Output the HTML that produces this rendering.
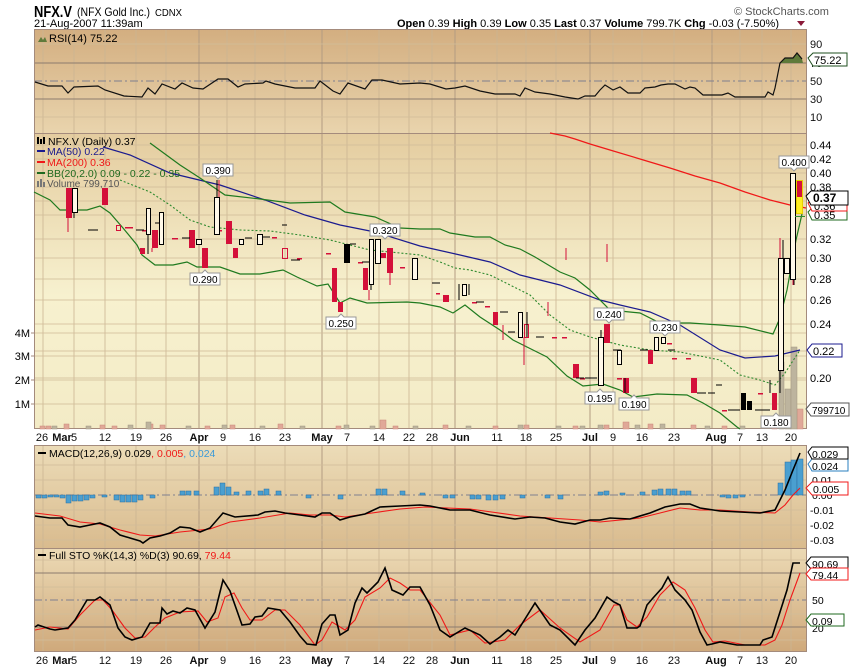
<!DOCTYPE html>
<html><head><meta charset="utf-8"><style>
html,body{margin:0;padding:0;background:#fff;width:850px;height:668px;overflow:hidden}
svg{display:block;font-family:"Liberation Sans",sans-serif}
</style></head><body>
<svg width="850" height="668" viewBox="0 0 850 668" xmlns="http://www.w3.org/2000/svg">
<defs>
<linearGradient id="gR" x1="0" y1="0" x2="0" y2="1"><stop offset="0" stop-color="#d3ae80"/><stop offset="1" stop-color="#e9d4ad"/></linearGradient>
<linearGradient id="gP" x1="0" y1="0" x2="0" y2="1"><stop offset="0" stop-color="#e4cc9f"/><stop offset="0.55" stop-color="#f7f1cf"/><stop offset="1" stop-color="#f3ebc6"/></linearGradient>
<linearGradient id="gM" x1="0" y1="0" x2="0" y2="1"><stop offset="0" stop-color="#ecdcb8"/><stop offset="1" stop-color="#d9bb8e"/></linearGradient>
<linearGradient id="gS" x1="0" y1="0" x2="0" y2="1"><stop offset="0" stop-color="#ecdab5"/><stop offset="1" stop-color="#cfa97b"/></linearGradient>
</defs>
<rect width="850" height="668" fill="#fff"/>
<!-- header -->
<text x="34" y="17" font-size="16" font-weight="bold" textLength="38" lengthAdjust="spacingAndGlyphs">NFX.V</text>
<text x="77" y="16" font-size="12" textLength="73" lengthAdjust="spacingAndGlyphs">(NFX Gold Inc.)</text>
<text x="155" y="16" font-size="10" textLength="27" lengthAdjust="spacingAndGlyphs">CDNX</text>
<text x="34" y="27" font-size="11">21-Aug-2007 11:39am</text>
<text x="734" y="15" font-size="11" fill="#555">© StockCharts.com</text>
<text x="397" y="27" font-size="11"><tspan font-weight="bold">Open</tspan> 0.39 <tspan font-weight="bold">High</tspan> 0.39 <tspan font-weight="bold">Low</tspan> 0.35 <tspan font-weight="bold">Last</tspan> 0.37 <tspan font-weight="bold">Volume</tspan> 799.7K <tspan font-weight="bold">Chg</tspan> -0.03 (-7.50%)</text>
<path d="M797 21h8l-4 5z" fill="#8b1a3a"/>

<!-- panels -->
<rect x="34" y="29" width="773" height="104" fill="url(#gR)"/>
<rect x="34" y="133" width="773" height="296" fill="url(#gP)"/>
<rect x="34" y="445" width="773" height="103" fill="url(#gM)"/>
<rect x="34" y="548" width="773" height="104" fill="url(#gS)"/>

<!-- vertical grids -->
<g stroke="#cbb593" stroke-width="1" opacity="0.8">
<path d="M43 29V429M74 29V429M105 29V429M136 29V429M166 29V429M227 29V429M255 29V429M285 29V429M347 29V429M379 29V429M409 29V429M432 29V429M497 29V429M526 29V429M556 29V429M613 29V429M642 29V429M674 29V429M740 29V429M762 29V429M791 29V429"/>
<path d="M43 445V652M74 445V652M105 445V652M136 445V652M166 445V652M227 445V652M255 445V652M285 445V652M347 445V652M379 445V652M409 445V652M432 445V652M497 445V652M526 445V652M556 445V652M613 445V652M642 445V652M674 445V652M740 445V652M762 445V652M791 445V652"/>
</g>
<g stroke="#b39c82" stroke-width="1">
<path d="M199 29V429M322 29V429M455 29V429M590 29V429M712 29V429M199 445V652M322 445V652M455 445V652M590 445V652M712 445V652"/>
</g>
<!-- horizontal grids -->
<g stroke="#d2bd9a" stroke-width="1" opacity="0.8">
<path d="M34 44H807M34 117H807M34 145H807M34 159H807M34 173H807M34 187H807M34 201H807M34 215H807M34 239H807M34 258H807M34 279H807M34 300H807M34 324H807M34 351H807M34 378H807M34 404H807M34 333H807M34 356H807M34 380H807"/>
<path d="M34 465H807M34 480H807M34 510H807M34 525H807M34 540H807M34 560H807M34 587H807M34 614H807M34 640H807"/>
</g>
<g stroke="#8c7b6e" stroke-width="1">
<path d="M34 63H807M34 99H807M34 573H807M34 627H807"/>
</g>
<g stroke="#7f7f8f" stroke-width="1" stroke-dasharray="8,3,2,3">
<path d="M34 81H807M34 600H807M34 495H807"/>
</g>
<!-- panel borders -->
<g fill="none" stroke="#a48b7c" stroke-width="1">
<rect x="34.5" y="29.5" width="772" height="399"/>
<path d="M34 133.5H807"/>
<rect x="34.5" y="445.5" width="772" height="206"/>
<path d="M34 548.5H807"/>
</g>

<!-- RSI -->
<path d="M780 63L785 58L793 58L797 53L802 59L803 63Z" fill="#5f7a3a"/>
<polyline fill="none" stroke="#111" stroke-width="1.2" points="35,82 48,86 62,86 68,93 74,87 98,86 105,90 124,96 142,97 148,88 155,94 162,84 175,89 182,83 193,88 203,89 218,79 228,79 238,87 245,84 263,83 266,81 275,84 295,88 315,88 320,81 333,91 340,94 348,83 365,89 372,80 382,80 400,84 420,83 430,84 446,89 455,88 465,86 480,91 495,94 515,94 520,96 525,88 535,92 550,94 565,97 578,99 585,96 595,96 600,90 605,85 613,90 620,87 628,93 640,93 645,88 655,87 661,85 668,84 675,84 685,89 690,87 695,88 703,95 713,95 722,95 728,93 735,97 765,97 768,92 773,95 775,88 780,63 785,58 793,58 797,53 802,59"/>
<path d="M38 42l3-5 2 3 2-3 2 5z" fill="#5f7a3a"/>
<text x="49" y="42" font-size="11">RSI(14) 75.22</text>
<g font-size="11" fill="#111">
<text x="810" y="48">90</text><text x="810" y="67">70</text><text x="810" y="85">50</text><text x="810" y="103">30</text><text x="810" y="121">10</text>
</g>
<path d="M808 58l5-5h34v13h-34z" fill="#fff" stroke="#1f4f1f"/>
<text x="814" y="64" font-size="11">75.22</text>

<!-- Price: volume bars -->
<g fill="#e0a898" stroke="#c98878" stroke-width="0.5">
<rect x="40" y="426" width="5" height="3"/><rect x="46" y="426" width="5" height="3"/><rect x="64" y="424" width="5" height="5"/><rect x="100" y="425" width="5" height="4"/><rect x="112" y="426" width="5" height="3"/><rect x="148" y="424" width="5" height="5"/><rect x="160" y="425" width="5" height="4"/><rect x="205" y="426" width="5" height="3"/><rect x="230" y="425" width="5" height="4"/><rect x="278" y="424" width="5" height="5"/><rect x="336" y="426" width="5" height="3"/><rect x="380" y="420" width="6" height="9"/><rect x="393" y="426" width="5" height="3"/><rect x="443" y="425" width="5" height="4"/><rect x="493" y="426" width="5" height="3"/><rect x="524" y="425" width="5" height="4"/><rect x="573" y="426" width="5" height="3"/><rect x="604" y="425" width="5" height="4"/><rect x="623" y="422" width="6" height="7"/><rect x="648" y="424" width="5" height="5"/><rect x="691" y="425" width="5" height="4"/><rect x="722" y="426" width="5" height="3"/><rect x="772" y="426" width="5" height="3"/><rect x="797" y="409" width="6" height="20"/>
</g>
<g fill="#bdb49e" stroke="#9f9680" stroke-width="0.5">
<rect x="52" y="426" width="5" height="3"/><rect x="86" y="426" width="5" height="3"/><rect x="128" y="425" width="5" height="4"/><rect x="146" y="422" width="5" height="7"/><rect x="186" y="426" width="5" height="3"/><rect x="222" y="425" width="5" height="4"/><rect x="260" y="426" width="5" height="3"/><rect x="300" y="426" width="5" height="3"/><rect x="344" y="425" width="5" height="4"/><rect x="370" y="426" width="5" height="3"/><rect x="413" y="426" width="5" height="3"/><rect x="466" y="426" width="5" height="3"/><rect x="518" y="425" width="5" height="4"/><rect x="556" y="426" width="5" height="3"/><rect x="580" y="426" width="5" height="3"/><rect x="598" y="425" width="5" height="4"/><rect x="635" y="425" width="5" height="4"/><rect x="660" y="424" width="5" height="5"/><rect x="705" y="426" width="5" height="3"/><rect x="740" y="426" width="5" height="3"/><rect x="779" y="362" width="5" height="67"/><rect x="785" y="389" width="6" height="40"/><rect x="791" y="347" width="6" height="82"/>
</g>

<!-- MA200 -->
<polyline fill="none" stroke="#f01818" stroke-width="1.2" points="550,133 565,136 575,139 590,144 610,150 640,159 670,168 695,176 720,183 745,192 770,200 790,205 806,208"/>
<!-- MA50 -->
<polyline fill="none" stroke="#1b1b8f" stroke-width="1.2" points="103,147 130,155 170,173 220,185 265,200 305,215 340,225 375,232 420,246 460,255 490,262 520,275 560,285 600,300 620,305 650,312 680,325 720,350 745,358 775,356 800,350"/>
<!-- BB upper -->
<polyline fill="none" stroke="#1f7a1f" stroke-width="1.2" points="150,143 180,165 200,178 225,195 260,199 290,203 330,202 345,212 375,217 400,228 420,229 440,229 450,233 475,237 490,237 505,245 520,249 535,257 560,272 575,278 590,290 610,310 640,313 660,323 690,323 720,325 745,327 773,334 780,318 787,290 796,240 802,214"/>
<!-- BB lower -->
<polyline fill="none" stroke="#1f7a1f" stroke-width="1.2" points="34,192 50,200 60,210 87,210 100,206 110,213 123,228 137,245 142,255 155,265 173,265 187,262 197,267 220,267 240,274 260,274 283,270 297,277 317,286 328,284 340,303 350,298 367,303 407,302 420,303 440,307 453,313 465,305 480,317 500,330 513,340 533,350 547,357 567,376 583,386 603,384 620,390 633,397 657,394 687,395 703,403 720,413 737,427 740,429"/>
<!-- BB mid -->
<polyline fill="none" stroke="#2f8a2f" stroke-width="1.1" stroke-dasharray="2,2" points="120,180 150,192 170,205 190,220 210,227 240,230 270,231 300,235 330,240 350,245 370,250 400,253 420,255 440,262 455,268 470,270 490,275 510,285 530,295 550,315 570,330 590,337 620,345 650,350 680,352 700,356 720,360 740,375 760,380 775,385 785,373 800,350"/>

<!-- candles -->
<g stroke="#d4103a" stroke-width="1">
<path d="M68 218V232M219 180V197M607 244V262M369 290V300M152 248V252M390 273V285M566 248V260M524 337V365M503 325V340M548 302V316M780 238V393M793 279V285"/>
</g>
<g fill="#d4103a">
<rect x="66" y="188" width="6" height="30"/><rect x="102" y="188" width="6" height="17"/><rect x="140" y="248" width="5" height="6"/><rect x="152" y="230" width="6" height="18"/><rect x="189" y="230" width="6" height="18"/><rect x="202" y="248" width="6" height="20"/><rect x="226" y="221" width="6" height="23"/><rect x="233" y="248" width="5" height="10"/><rect x="332" y="268" width="5" height="34"/><rect x="338" y="302" width="5" height="10"/><rect x="363" y="268" width="5" height="22"/><rect x="380" y="253" width="6" height="5"/><rect x="387" y="248" width="6" height="25"/><rect x="443" y="295" width="6" height="7"/><rect x="493" y="312" width="5" height="13"/><rect x="573" y="364" width="6" height="14"/><rect x="604" y="324" width="6" height="19"/><rect x="623" y="378" width="6" height="15"/><rect x="648" y="350" width="5" height="14"/><rect x="691" y="378" width="6" height="15"/><rect x="772" y="393" width="5" height="17"/>
</g>
<g fill="none" stroke="#d4103a" stroke-width="1">
<rect x="116.5" y="225.5" width="4" height="5"/><rect x="282.5" y="248.5" width="5" height="10"/><rect x="524.5" y="324.5" width="4" height="13"/>
</g>
<g fill="#d4103a">
<rect x="125" y="227" width="8" height="1.5"/><rect x="142" y="230" width="6" height="1.5"/><rect x="172" y="238" width="6" height="1.5"/><rect x="216" y="230" width="6" height="1.5"/><rect x="272" y="237" width="5" height="1.5"/><rect x="297" y="258" width="5" height="1.5"/><rect x="326" y="253" width="5" height="1.5"/><rect x="358" y="262" width="5" height="1.5"/><rect x="400" y="267" width="5" height="1.5"/><rect x="436" y="293" width="4" height="1.5"/><rect x="472" y="302" width="5" height="1.5"/><rect x="485" y="306" width="5" height="1.5"/><rect x="552" y="337" width="5" height="1.5"/><rect x="562" y="337" width="5" height="1.5"/><rect x="580" y="378" width="5" height="1.5"/><rect x="617" y="378" width="5" height="1.5"/><rect x="667" y="343" width="5" height="1.5"/><rect x="672" y="358" width="5" height="1.5"/><rect x="686" y="358" width="5" height="1.5"/><rect x="722" y="410" width="5" height="1.5"/><rect x="758" y="393" width="5" height="1.5"/>
</g>
<g stroke="#000" stroke-width="1">
<path d="M74 212V218M148 234V254M217 180V197M371 284V290M459 284V300M469 284V295M527 312V337M601 330V385M625 378V393M656 337V350M780 370V393M794 279V285M770 380V393M783 240V258M88 230H98M136 230H144M182 238H190M245 238H252M262 237H270M291 260H300M350 244H356M432 283H440M476 302H484M500 312H508M508 332H515M536 337H544M576 378H584M585 378H597M613 350H621M640 350H648M668 350H675M697 393H706M708 393H715M716 385H722M728 410H740M755 410H770M282 225H287M155 223H160M362 262H370"/>
</g>
<g fill="#fff8e8" stroke="#000" stroke-width="1">
<rect x="72.5" y="188.5" width="5" height="24"/><rect x="146.5" y="208.5" width="4" height="26"/><rect x="159.5" y="212.5" width="4" height="32"/><rect x="196.5" y="239.5" width="5" height="5"/><rect x="214.5" y="197.5" width="5" height="37"/><rect x="239.5" y="239.5" width="4" height="5"/><rect x="257.5" y="234.5" width="5" height="10"/><rect x="369.5" y="239.5" width="4" height="45"/><rect x="375.5" y="239.5" width="5" height="24"/><rect x="412.5" y="258.5" width="5" height="21"/><rect x="462.5" y="284.5" width="4" height="11"/><rect x="518.5" y="312.5" width="4" height="25"/><rect x="598.5" y="337.5" width="5" height="48"/><rect x="617.5" y="350.5" width="4" height="14"/><rect x="654.5" y="337.5" width="4" height="13"/><rect x="661.5" y="337.5" width="4" height="6"/><rect x="778.5" y="258.5" width="5" height="112"/><rect x="784.5" y="258.5" width="5" height="15"/><rect x="790.5" y="173.5" width="5" height="106"/>
</g>
<g fill="#000">
<rect x="344" y="244" width="6" height="19"/><rect x="741" y="393" width="5" height="17"/><rect x="747" y="401" width="5" height="9"/>
</g>
<rect x="796.5" y="180.5" width="6" height="33" fill="#ffee22" stroke="#e8d000"/>
<rect x="797" y="181" width="5" height="16" fill="#d4103a"/>
<rect x="795" y="216" width="10" height="1" fill="#2f8a2f"/>

<!-- price labels -->
<g font-size="10" text-anchor="middle">
<path d="M203 164h30v12h-12l-3 3-3-3h-12z" fill="#fff" stroke="#999"/><text x="218" y="174">0.390</text>
<path d="M370 224h30v12h-12l-3 3-3-3h-12z" fill="#fff" stroke="#999"/><text x="385" y="234">0.320</text>
<path d="M779 156h30v12h-12l-3 3-3-3h-12z" fill="#fff" stroke="#999"/><text x="794" y="166">0.400</text>
<path d="M594 308h30v12h-12l-3 3-3-3h-12z" fill="#fff" stroke="#999"/><text x="609" y="318">0.240</text>
<path d="M650 321h30v12h-12l-3 3-3-3h-12z" fill="#fff" stroke="#999"/><text x="665" y="331">0.230</text>
<path d="M190 273h12l3-3 3 3h12v12h-30z" fill="#fff" stroke="#999"/><text x="205" y="283">0.290</text>
<path d="M326 317h12l3-3 3 3h12v12h-30z" fill="#fff" stroke="#999"/><text x="341" y="327">0.250</text>
<path d="M585 392h12l3-3 3 3h12v12h-30z" fill="#fff" stroke="#999"/><text x="600" y="402">0.195</text>
<path d="M619 398h12l3-3 3 3h12v12h-30z" fill="#fff" stroke="#999"/><text x="634" y="408">0.190</text>
<path d="M761 416h12l3-3 3 3h12v12h-30z" fill="#fff" stroke="#999"/><text x="776" y="426">0.180</text>
</g>
<!-- legend -->
<g font-size="10.5">
<path d="M37 137h2v7h-2zM40 139h2v5h-2zM43 137h2v7h-2z" fill="#000"/>
<text x="48" y="145">NFX.V (Daily) 0.37</text>
<rect x="37" y="150" width="8" height="2" fill="#1b1b8f"/><text x="47" y="155" fill="#1b1b8f">MA(50) 0.22</text>
<rect x="37" y="161" width="8" height="2" fill="#f01818"/><text x="47" y="166" fill="#f01818">MA(200) 0.36</text>
<rect x="37" y="172" width="8" height="2" fill="#1f6a1f"/><text x="47" y="177" fill="#1f6a1f">BB(20,2.0) 0.09 - 0.22 - 0.35</text>
<path d="M37 181h2v6h-2zM40 179h2v8h-2zM43 182h2v5h-2z" fill="#777"/>
<text x="47" y="187" fill="#555" font-size="10">Volume 799,710</text>
</g>
<!-- price axis -->
<g font-size="11">
<text x="810" y="149">0.44</text><text x="810" y="163">0.42</text><text x="810" y="177">0.40</text><text x="810" y="191">0.38</text><text x="810" y="243">0.32</text><text x="810" y="262">0.30</text><text x="810" y="283">0.28</text><text x="810" y="304">0.26</text><text x="810" y="328">0.24</text><text x="810" y="382">0.20</text>
</g>
<path d="M808 212l4-4h35v12h-35z" fill="#fff" stroke="#1f6a1f"/><text x="814" y="219" font-size="11">0.35</text>
<path d="M808 203l4-4h35v12h-35z" fill="#fff" stroke="#f01818"/><text x="814" y="210" font-size="11">0.36</text>
<path d="M806 196l5-5h37v14h-37z" fill="#fff" stroke="#000"/><text x="813" y="202" font-size="12" font-weight="bold">0.37</text>
<path d="M807 350l5-6h30v13h-30z" fill="#fff" stroke="#1b1b8f"/><text x="813" y="355" font-size="11">0.22</text>
<path d="M806 409l5-6h38v13h-38z" fill="#fff" stroke="#555"/><text x="812" y="414" font-size="10">799710</text>
<g font-size="11" text-anchor="end"><text x="30" y="337">4M</text><text x="30" y="360">3M</text><text x="30" y="384">2M</text><text x="30" y="408">1M</text></g>
<path d="M31 333h3M31 356h3M31 380h3M31 404h3" stroke="#a48b7c"/>

<!-- dates -->
<g font-size="11" text-anchor="middle" fill="#111">
<text x="42" y="441">26</text><text x="74" y="441">5</text><text x="105" y="441">12</text><text x="136" y="441">19</text><text x="166" y="441">26</text><text x="223" y="441">9</text><text x="255" y="441">16</text><text x="285" y="441">23</text><text x="347" y="441">7</text><text x="379" y="441">14</text><text x="409" y="441">22</text><text x="432" y="441">28</text><text x="497" y="441">11</text><text x="526" y="441">18</text><text x="556" y="441">25</text><text x="613" y="441">9</text><text x="642" y="441">16</text><text x="674" y="441">23</text><text x="740" y="441">7</text><text x="762" y="441">13</text><text x="791" y="441">20</text>
<g font-weight="bold"><text x="62" y="441">Mar</text><text x="199" y="441">Apr</text><text x="322" y="441">May</text><text x="460" y="441">Jun</text><text x="590" y="441">Jul</text><text x="716" y="441">Aug</text></g>
</g>
<g font-size="11" text-anchor="middle" fill="#111">
<text x="42" y="664">26</text><text x="74" y="664">5</text><text x="105" y="664">12</text><text x="136" y="664">19</text><text x="166" y="664">26</text><text x="223" y="664">9</text><text x="255" y="664">16</text><text x="285" y="664">23</text><text x="347" y="664">7</text><text x="379" y="664">14</text><text x="409" y="664">22</text><text x="432" y="664">28</text><text x="497" y="664">11</text><text x="526" y="664">18</text><text x="556" y="664">25</text><text x="613" y="664">9</text><text x="642" y="664">16</text><text x="674" y="664">23</text><text x="740" y="664">7</text><text x="762" y="664">13</text><text x="791" y="664">20</text>
<g font-weight="bold"><text x="62" y="664">Mar</text><text x="199" y="664">Apr</text><text x="322" y="664">May</text><text x="460" y="664">Jun</text><text x="590" y="664">Jul</text><text x="716" y="664">Aug</text></g>
</g>

<!-- MACD -->
<g fill="#4a9fd0" stroke="#2a6f9f" stroke-width="0.5">
<rect x="36" y="495" width="5" height="3"/><rect x="42" y="495" width="5" height="3"/><rect x="48" y="495" width="5" height="2"/><rect x="54" y="495" width="5" height="2"/><rect x="60" y="495" width="5" height="3"/><rect x="66" y="495" width="5" height="8"/><rect x="72" y="495" width="5" height="6"/><rect x="78" y="495" width="5" height="6"/><rect x="84" y="495" width="5" height="5"/><rect x="90" y="495" width="5" height="3"/><rect x="102" y="495" width="5" height="2"/><rect x="114" y="495" width="5" height="5"/><rect x="120" y="495" width="5" height="7"/><rect x="126" y="495" width="5" height="7"/><rect x="132" y="495" width="5" height="7"/><rect x="138" y="495" width="5" height="5"/><rect x="150" y="495" width="5" height="3"/><rect x="180" y="491" width="5" height="4"/><rect x="186" y="491" width="5" height="4"/><rect x="194" y="491" width="5" height="4"/><rect x="214" y="487" width="5" height="8"/><rect x="220" y="483" width="5" height="12"/><rect x="226" y="487" width="5" height="8"/><rect x="234" y="492" width="5" height="3"/><rect x="246" y="491" width="5" height="4"/><rect x="258" y="491" width="5" height="4"/><rect x="264" y="489" width="5" height="6"/><rect x="276" y="491" width="5" height="4"/><rect x="306" y="495" width="5" height="3"/><rect x="338" y="495" width="5" height="4"/><rect x="376" y="489" width="5" height="6"/><rect x="382" y="489" width="5" height="6"/><rect x="400" y="491" width="5" height="4"/><rect x="420" y="493" width="5" height="2"/><rect x="443" y="495" width="5" height="3"/><rect x="450" y="495" width="5" height="3"/><rect x="470" y="495" width="5" height="4"/><rect x="476" y="495" width="5" height="4"/><rect x="486" y="495" width="5" height="5"/><rect x="493" y="495" width="5" height="5"/><rect x="500" y="495" width="5" height="4"/><rect x="520" y="495" width="5" height="3"/><rect x="545" y="495" width="5" height="3"/><rect x="558" y="495" width="5" height="4"/><rect x="598" y="492" width="5" height="3"/><rect x="604" y="491" width="5" height="4"/><rect x="620" y="493" width="5" height="2"/><rect x="640" y="492" width="5" height="3"/><rect x="652" y="490" width="5" height="5"/><rect x="658" y="489" width="5" height="6"/><rect x="666" y="489" width="5" height="6"/><rect x="672" y="489" width="5" height="6"/><rect x="680" y="491" width="5" height="4"/><rect x="686" y="491" width="5" height="4"/><rect x="720" y="495" width="5" height="2"/><rect x="726" y="495" width="5" height="3"/><rect x="733" y="495" width="5" height="3"/><rect x="740" y="495" width="5" height="2"/><rect x="778" y="483" width="5" height="12"/><rect x="785" y="462" width="6" height="33"/><rect x="791" y="460" width="6" height="35"/><rect x="797" y="459" width="6" height="36"/>
</g>
<polyline fill="none" stroke="#f01818" stroke-width="1.1" points="35,513 60,516 80,522 100,524 120,530 140,535 155,536 180,532 210,529 230,522 260,518 290,513 310,515 330,515 345,517 365,514 400,509 425,507 470,509 520,516 580,520 600,522 640,518 660,513 680,508 700,510 720,510 750,512 775,513 785,505 793,495 800,488"/>
<polyline fill="none" stroke="#000" stroke-width="1.6" points="35,516 50,518 62,518 68,525 80,527 90,525 100,523 110,527 120,535 130,538 140,541 143,543 150,538 160,536 170,533 180,527 190,528 200,532 210,528 223,513 235,517 258,515 265,512 275,511 285,513 300,515 315,517 322,513 330,513 340,520 350,517 365,514 380,507 400,506 420,505 430,506 450,510 470,510 490,515 515,519 530,517 545,518 560,522 575,524 590,520 600,520 610,518 630,519 650,513 665,507 680,504 690,504 700,508 720,511 740,512 760,513 775,510 785,490 793,470 800,453"/>
<rect x="38" y="452" width="8" height="2" fill="#000"/>
<text x="49" y="457" font-size="10.5">MACD(12,26,9) 0.029<tspan fill="#f01818">, 0.005</tspan><tspan fill="#3a9ad8">, 0.024</tspan></text>
<g font-size="10.5"><text x="812" y="484">0.01</text><text x="812" y="499">0.00</text><text x="810" y="514">-0.01</text><text x="810" y="529">-0.02</text><text x="810" y="544">-0.03</text></g>
<path d="M808 464l4-5h36v12h-36z" fill="#fff" stroke="#2a7fbf"/><text x="812" y="470" font-size="10.5">0.024</text>
<path d="M808 452l4-5h36v12h-36z" fill="#fff" stroke="#000"/><text x="812" y="458" font-size="10.5">0.029</text>
<path d="M806 488l6-6h36v13h-36z" fill="#fff" stroke="#f01818"/><text x="813" y="493" font-size="10.5">0.005</text>

<!-- STO -->
<polyline fill="none" stroke="#f01818" stroke-width="1.1" points="35,630 50,627 68,629 80,615 95,600 103,600 112,610 125,628 135,638 145,637 155,627 165,618 180,612 198,611 207,622 218,618 225,597 234,593 242,608 250,620 262,620 275,610 285,610 300,625 315,645 322,640 332,622 345,630 355,620 365,597 380,588 390,578 400,583 410,590 420,590 440,615 450,635 470,630 485,643 505,640 520,625 540,610 560,628 580,642 600,630 614,605 620,605 627,620 637,627 647,617 660,595 673,582 685,590 695,608 705,630 713,642 725,641 745,645 765,645 775,640 782,625 790,600 800,573"/>
<polyline fill="none" stroke="#000" stroke-width="1.6" points="35,627 38,625 50,629 55,630 68,628 75,620 87,600 95,600 100,597 110,605 118,628 125,637 132,640 142,637 150,623 160,623 162,608 167,614 173,611 180,613 187,608 195,610 205,628 215,612 218,600 223,580 230,591 242,625 250,624 255,617 262,616 268,608 280,610 290,622 300,636 307,644 316,645 322,624 330,615 335,615 340,635 348,630 355,603 362,588 367,593 378,582 385,568 392,590 403,595 410,587 420,587 430,605 440,630 450,637 465,628 480,635 490,644 500,637 508,630 515,635 535,603 550,625 560,630 575,645 585,630 595,618 607,597 614,602 620,605 627,628 637,628 640,626 647,605 653,598 662,588 668,577 675,590 685,600 692,610 700,632 707,645 712,644 720,642 737,645 760,645 763,640 772,637 780,612 787,590 793,563 800,563"/>
<rect x="38" y="554" width="8" height="2" fill="#000"/>
<text x="49" y="559" font-size="10.5">Full STO %K(14,3) %D(3) 90.69, <tspan fill="#f01818">79.44</tspan></text>
<g font-size="10.5"><text x="812" y="604">50</text><text x="812" y="632">20</text></g>
<path d="M806 563l5-6h37v12h-37z" fill="#fff" stroke="#000"/><text x="812" y="568" font-size="10.5">90.69</text>
<path d="M806 574l5-6h37v12h-37z" fill="#fff" stroke="#f01818"/><text x="812" y="579" font-size="10.5">79.44</text>
<path d="M806 620l5-6h33v12h-33z" fill="#fff" stroke="#1f6a1f"/><text x="812" y="625" font-size="10.5">0.09</text>
</svg>
</body></html>
